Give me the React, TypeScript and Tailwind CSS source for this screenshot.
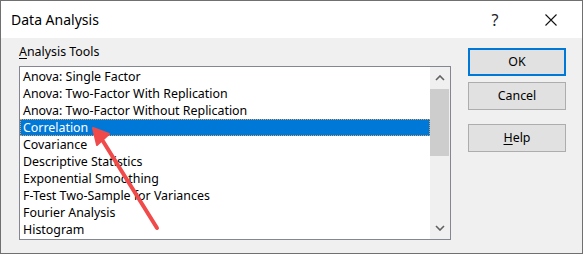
import React from "react";

const items = [
  "Anova: Single Factor",
  "Anova: Two-Factor With Replication",
  "Anova: Two-Factor Without Replication",
  "Correlation",
  "Covariance",
  "Descriptive Statistics",
  "Exponential Smoothing",
  "F-Test Two-Sample for Variances",
  "Fourier Analysis",
  "Histogram",
];

export default function App() {
  return (
    <div
      className="relative w-[583px] h-[254px] border border-[#707070] bg-[#f0f0f0] flex flex-col overflow-hidden text-black"
      style={{ fontFamily: '"Noto Sans", "Open Sans", sans-serif' }}
    >
      {/* Title bar */}
      <div className="h-[37px] bg-white flex items-center pl-[10px] shrink-0">
        <span className="text-[14px] flex-1">Data Analysis</span>
        <span className="text-[16px] w-[12px] text-center mr-[44px] text-[#222]">?</span>
        <svg width="12" height="12" viewBox="0 0 12 12" className="mr-[25px]">
          <path d="M0.5 0.5 L11.5 11.5 M11.5 0.5 L0.5 11.5" stroke="#111" strokeWidth="1.1" fill="none" />
        </svg>
      </div>

      {/* Body */}
      <div className="flex flex-1">
        {/* Left column */}
        <div className="pl-[18px] pt-[6px] flex flex-col">
          <div className="text-[12.4px] leading-[16px] h-[22px]">
            <span className="underline underline-offset-2">A</span>nalysis Tools
          </div>
          <div className="w-[432px] h-[174px] border border-[#828790] bg-white flex">
            <div className="flex-1 pt-[1px] flex flex-col">
              {items.map((t, i) => (
                <div
                  key={t}
                  className={
                    i === 3
                      ? "h-[17px] pl-[3px] text-[12.4px] leading-[17px] bg-[#0078d7] text-white outline outline-1 outline-dotted outline-[#e0a060] -outline-offset-1"
                      : "h-[17px] pl-[3px] text-[12.4px] leading-[17px]"
                  }
                >
                  {t}
                </div>
              ))}
            </div>
            <div className="w-[20px] bg-[#f0f0f0] flex flex-col">
              <div className="h-[22px] flex items-center justify-center">
                <svg width="10" height="6" viewBox="0 0 10 6">
                  <path d="M1 5 L5 1 L9 5" stroke="#606060" strokeWidth="1.6" fill="none" />
                </svg>
              </div>
              <div className="h-[67px] w-[19px] bg-[#cdcdcd]" />
              <div className="flex-1" />
              <div className="h-[22px] flex items-center justify-center">
                <svg width="10" height="6" viewBox="0 0 10 6">
                  <path d="M1 1 L5 5 L9 1" stroke="#606060" strokeWidth="1.6" fill="none" />
                </svg>
              </div>
            </div>
          </div>
        </div>

        {/* Right column */}
        <div className="ml-[17px] pt-[10px] flex flex-col">
          <button className="w-[98px] h-[28px] bg-[#e1e1e1] border-2 border-[#0078d7] text-[12.4px]">
            OK
          </button>
          <button className="mt-[6px] w-[98px] h-[28px] bg-[#e1e1e1] border border-[#adadad] text-[12.4px]">
            Cancel
          </button>
          <button className="mt-[14px] w-[98px] h-[28px] bg-[#e1e1e1] border border-[#adadad] text-[12.4px]">
            <span className="underline underline-offset-2">H</span>elp
          </button>
        </div>
      </div>

      {/* Red annotation arrow */}
      <svg
        className="absolute left-0 top-0 pointer-events-none"
        width="583"
        height="254"
        viewBox="0 0 583 254"
      >
        <line x1="156" y1="227" x2="100" y2="137" stroke="#f04a4a" strokeWidth="4" strokeLinecap="round" />
        <path d="M92 127 L108 133 L96 144 Z" fill="#f04a4a" stroke="#f04a4a" strokeWidth="2" strokeLinejoin="round" />
      </svg>
    </div>
  );
}
